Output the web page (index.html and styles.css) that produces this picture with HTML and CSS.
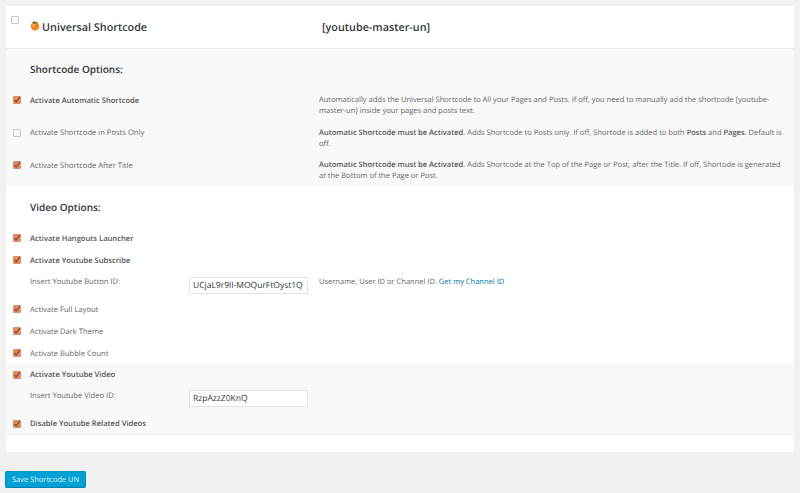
FILE: index.html
```html
<!DOCTYPE html>
<html lang="en">
<head>
<meta charset="utf-8">
<title>Universal Shortcode</title>
<link rel="stylesheet" href="styles.css">
</head>
<body>
<svg class="defs" width="0" height="0" aria-hidden="true"><defs>
<symbol id="tick" viewBox="0 0 8 8"><path d="M1.6 4.1 3.2 5.8 6.9 1" fill="none" stroke="#6a4635" stroke-width="1.1"/></symbol>
</defs></svg>
<main class="card">
  <header class="head">
    <span class="box head-box"></span>
    <svg class="logo" viewBox="0 0 10 11" aria-hidden="true">
      <circle cx="5" cy="6.3" r="4.2" fill="#ee8a1d"/>
      <circle cx="3.8" cy="5.2" r="1.2" fill="#f8b860"/>
      <path d="M2.2 2.4 4.6 1 5.2 2.4 8 1.4 6.6 3.4 3.6 3.4Z" fill="#4f6a2a"/>
    </svg>
    <h1 class="title">Universal Shortcode</h1>
    <div class="code">[youtube-master-un]</div>
  </header>

  <section class="group tint first">
    <h2 class="sub">Shortcode Options:</h2>
    <div class="row tall">
      <span class="box on"><svg><use href="#tick"/></svg></span>
      <label class="name strong">Activate Automatic Shortcode</label>
      <p class="desc">Automatically adds the Universal Shortcode to All your Pages and Posts. If off, you need to manually add the shortcode [youtube-master-un] inside your pages and posts text.</p>
    </div>
    <div class="row tall">
      <span class="box"></span>
      <label class="name">Activate Shortcode in Posts Only</label>
      <p class="desc"><b>Automatic Shortcode must be Activated</b>. Adds Shortcode to Posts only. If off, Shortode is added to both <b>Posts</b> and <b>Pages</b>. Default is off.</p>
    </div>
    <div class="row last">
      <span class="box on"><svg><use href="#tick"/></svg></span>
      <label class="name">Activate Shortcode After Title</label>
      <p class="desc"><b>Automatic Shortcode must be Activated</b>. Adds Shortcode at the Top of the Page or Post, after the Title. If off, Shortode is generated at the Bottom of the Page or Post.</p>
    </div>
  </section>

  <section class="group plain">
    <h2 class="sub low">Video Options:</h2>
    <div class="row line">
      <span class="box on"><svg><use href="#tick"/></svg></span>
      <label class="name strong">Activate Hangouts Launcher</label>
    </div>
    <div class="row line">
      <span class="box on"><svg><use href="#tick"/></svg></span>
      <label class="name strong">Activate Youtube Subscribe</label>
    </div>
    <div class="row field">
      <span class="spacer"></span>
      <label class="name">Insert Youtube Button ID:</label>
      <input class="input" type="text" value="UCjaL9r9lI-MOQurFtOyst1Q">
      <p class="desc note">Username, User ID or Channel ID. <a href="#">Get my Channel ID</a></p>
    </div>
    <div class="row line">
      <span class="box on"><svg><use href="#tick"/></svg></span>
      <label class="name">Activate Full Layout</label>
    </div>
    <div class="row line">
      <span class="box on"><svg><use href="#tick"/></svg></span>
      <label class="name">Activate Dark Theme</label>
    </div>
    <div class="row line">
      <span class="box on"><svg><use href="#tick"/></svg></span>
      <label class="name">Activate Bubble Count</label>
    </div>
  </section>

  <section class="group tint video">
    <div class="row line">
      <span class="box on"><svg><use href="#tick"/></svg></span>
      <label class="name strong">Activate Youtube Video</label>
    </div>
    <div class="row field">
      <span class="spacer"></span>
      <label class="name">Insert Youtube Video ID:</label>
      <input class="input" type="text" value="RzpAzzZ0KnQ">
    </div>
    <div class="row line">
      <span class="box on"><svg><use href="#tick"/></svg></span>
      <label class="name strong">Disable Youtube Related Videos</label>
    </div>
  </section>
</main>
<button class="save" type="button">Save Shortcode UN</button>
</body>
</html>
```
FILE: styles.css
```css
* { box-sizing: border-box; }
html, body { margin: 0; }
body {
  width: 800px;
  height: 493px;
  overflow: hidden;
  background: #f1f1f1;
  padding: 6px 6px 0 6px;
  font-family: "Open Sans", "Noto Sans", sans-serif;
  color: #555;
  font-size: 7.6px;
  line-height: 11px;
  text-rendering: geometricPrecision;
}
.defs { position: absolute; }
.card { background: #fff; height: 446px; }
.head {
  display: flex;
  height: 43px;
  border-bottom: 1px solid #ebebeb;
  padding-left: 5px;
}
.logo { width: 10px; height: 11px; margin: 14px 2px 0 11px; flex: none; }
.title, .code {
  margin: 0;
  font-size: 10.8px;
  font-weight: 600;
  line-height: 16px;
  padding-top: 14px;
  color: #32373c;
}
.title { width: 280px; }
.group { padding-left: 7px; padding-right: 8px; }
.tint { background: #f9f9f9; }
.plain { background: #fff; height: 178px; }
.first { height: 137px; }
.video { height: 71px; padding-top: 5.5px; border-bottom: 1px solid #ebebeb; }
.sub {
  margin: 0;
  padding: 12px 0 0 17px;
  height: 46px;
  font-size: 10px;
  line-height: 16px;
  font-weight: 600;
  color: #32373c;
}
.low { padding-top: 13px; height: 47px; }
.row { display: flex; align-items: flex-start; }
.tall { height: 32.5px; }
.last { height: 26px; }
.line { height: 22px; }
.field { height: 27px; }
.box {
  flex: none;
  width: 8px;
  height: 8px;
  margin-top: 1px;
  background: #fbfbfb;
  border: 1px solid #c8c8c8;
  border-radius: 1px;
}
.box.head-box { margin-top: 10px; }
.box.on { background: #e58a5f; border-color: #e58a5f; }
.box svg { display: block; width: 8px; height: 8px; margin: -1px; }
.spacer { flex: none; width: 8px; }
.name { flex: none; width: 160px; margin: 0.5px 0 0 9px; color: #666; }
.strong { font-weight: 600; color: #555; }
.field .name { margin-top: -0.5px; }
.desc { margin: 0; padding-left: 129px; flex: 1; color: #666; font-size: 7.52px; }
.desc b { font-weight: 600; color: #555; }
.desc.note { padding-left: 11px; margin-top: -0.5px; }
.note a { color: #0073aa; text-decoration: none; }
.input {
  flex: none;
  width: 119px;
  height: 17px;
  margin: -0.5px 0 0 -1px;
  padding: 0 3px;
  background: #fff;
  border: 1px solid #e2e2e2;
  font: 8.5px/15px "Open Sans", "Noto Sans", sans-serif;
  text-rendering: geometricPrecision;
  color: #32373c;
  border-radius: 0;
}
.video .input { margin-top: -1.5px; }
.save {
  display: block;
  width: 81px;
  height: 17px;
  margin: 19px 0 0 -1px;
  padding: 0;
  background: #00a0d2;
  border: 1px solid #0091c4;
  border-bottom-color: #0080b0;
  border-radius: 2px;
  color: #e6f6fb;
  font: 7.5px/14px "Open Sans", "Noto Sans", sans-serif;
  text-rendering: geometricPrecision;
}
```
